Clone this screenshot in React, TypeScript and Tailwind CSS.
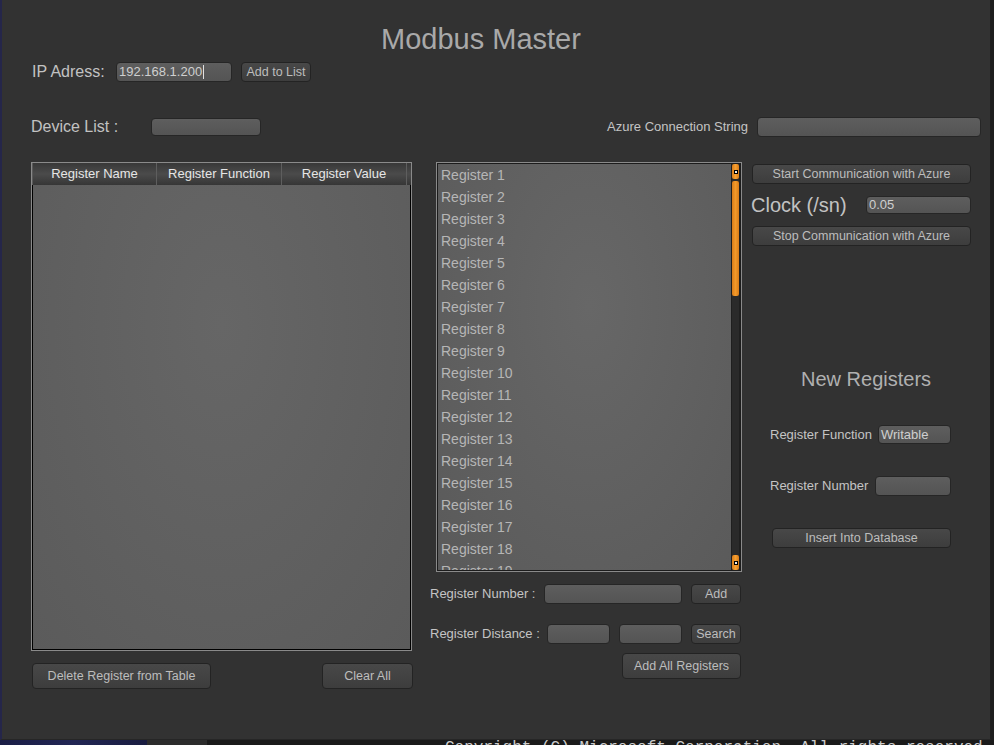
const input =
  "rounded-[4px] border border-[#262626] bg-linear-to-b from-[#5e5e5e] to-[#545454]";
const button =
  "rounded-[4px] border border-[#232323] bg-linear-to-b from-[#484848] to-[#3d3d3d] text-[12.5px] text-[#bdbdbd] flex items-center justify-center";

function Arrow() {
  return (
    <div className="h-[15px] rounded-[2px] bg-linear-to-r from-[#d97c18] via-[#f7a030] to-[#d97c18] flex items-center justify-center">
      <span className="w-[4px] h-[4px] border border-black bg-[#eeeeee]" />
    </div>
  );
}

function RegisterList() {
  // only the rows that fit are drawn; the 19th is cut by the frame
  const items = Array.from({ length: 19 }, (_, i) => `Register ${i + 1}`);
  return (
    <div className="ml-[6px] w-[306px] h-[410px] border border-[#8a8a8a]">
      <div className="h-full border border-[#1c1c1c] flex bg-[radial-gradient(ellipse_at_50%_35%,#676767_0%,#5a5a5a_100%)]">
        <div className="flex-1 overflow-hidden pl-[3px]">
          {items.map((t) => (
            <div key={t} className="h-[22px] leading-[22px] text-[14px] text-[#b6b6b6]">
              {t}
            </div>
          ))}
        </div>
        {/* scrollbar */}
        <div className="w-[9px] bg-[#2a2a2a] border-x border-[#1f1f1f] flex flex-col">
          <Arrow />
          <div className="mt-[2px] h-[115px] rounded-[2px] bg-linear-to-r from-[#d97c18] via-[#f39a2a] to-[#d97c18]" />
          <div className="flex-1" />
          <Arrow />
        </div>
      </div>
    </div>
  );
}

function RegisterTable() {
  const cols = ["Register Name", "Register Function", "Register Value"];
  return (
    <div className="w-[381px] h-[489px] border border-[#8a8a8a] flex flex-col">
      <div className="h-[22px] flex border-l border-[#5a5a5a]">
        {cols.map((c) => (
          <div
            key={c}
            className="w-[125px] first:w-[124px] flex items-center justify-center text-[13px] text-[#e6e6e6] border-r border-[#5e5e5e] bg-linear-to-b from-[#383838] via-[#4b4b4b] to-[#363636]"
          >
            {c}
          </div>
        ))}
        <div className="flex-1 bg-linear-to-b from-[#383838] via-[#4b4b4b] to-[#363636]" />
      </div>
      <div className="flex-1 border-x border-b border-black bg-[radial-gradient(ellipse_at_50%_30%,#666666_0%,#5b5b5b_100%)]" />
    </div>
  );
}

export default function App() {
  return (
    <div className="w-[994px] h-[745px] bg-[#1e1e1e] overflow-hidden font-['Liberation_Sans',Arial,sans-serif]">
      <div className="w-[991px] h-[740px] bg-[#323232] border-l-2 border-l-[#25264a] border-r border-r-[#1f1f1f] border-b border-b-[#262626] flex flex-col">
        {/* title */}
        <div className="mt-[22px] h-[34px] ml-[379px] text-[29px] leading-[34px] text-[#a9a9a9]">
          Modbus Master
        </div>

        {/* IP row */}
        <div className="mt-[6px] h-[20px] ml-[30px] flex items-center">
          <span className="w-[84px] text-[16px] text-[#c2c2c2]">IP Adress:</span>
          <div className={`${input} w-[116px] h-[20px] flex items-center pl-[2px] text-[13px] text-[#cfcfcf]`}>
            192.168.1.200
            <span className="ml-[1px] w-[1px] h-[14px] bg-[#e0e0e0]" />
          </div>
          <div className={`${button} ml-[9px] w-[70px] h-[20px]`}>Add to List</div>
        </div>

        {/* device / azure row */}
        <div className="mt-[35px] h-[20px] ml-[29px] mr-[9px] flex items-center">
          <span className="w-[120px] text-[16px] text-[#c2c2c2]">Device List :</span>
          <div className={`${input} w-[110px] h-[18px]`} />
          <div className="flex-1" />
          <span className="text-[13px] text-[#c4c4c4]">Azure Connection String</span>
          <div className={`${input} ml-[9px] w-[224px] h-[20px]`} />
        </div>

        {/* main */}
        <div className="mt-[25px] ml-[29px] flex">
          {/* left */}
          <div className="w-[382px] flex flex-col">
            <RegisterTable />
            <div className="mt-[12px] flex justify-between">
              <div className={`${button} ml-[1px] w-[179px] h-[26px]`}>Delete Register from Table</div>
              <div className={`${button} w-[91px] h-[26px]`}>Clear All</div>
            </div>
          </div>

          {/* middle */}
          <div className="ml-[17px] w-[312px] flex flex-col">
            <RegisterList />
            <div className="mt-[12px] h-[20px] flex items-center">
              <span className="w-[114px] text-[13px] text-[#c4c4c4]">Register Number :</span>
              <div className={`${input} w-[138px] h-[20px]`} />
              <div className={`${button} ml-[9px] w-[50px] h-[20px]`}>Add</div>
            </div>
            <div className="mt-[20px] h-[20px] flex items-center">
              <span className="w-[117px] text-[13px] text-[#c4c4c4]">Register Distance :</span>
              <div className={`${input} w-[63px] h-[20px]`} />
              <div className={`${input} ml-[9px] w-[63px] h-[20px]`} />
              <div className={`${button} ml-[9px] w-[50px] h-[20px]`}>Search</div>
            </div>
            <div className="mt-[9px] pr-[1px] flex justify-end">
              <div className={`${button} w-[119px] h-[26px]`}>Add All Registers</div>
            </div>
          </div>

          {/* right */}
          <div className="ml-[9px] w-[230px] flex flex-col">
            <div className={`${button} mt-[2px] ml-[1px] w-[219px] h-[20px]`}>
              Start Communication with Azure
            </div>
            <div className="mt-[12px] h-[18px] flex items-center">
              <span className="w-[115px] text-[20px] text-[#c2c2c2]">Clock (/sn)</span>
              <div className={`${input} w-[105px] h-[18px] flex items-center pl-[2px] text-[13px] text-[#cfcfcf]`}>
                0.05
              </div>
            </div>
            <div className={`${button} mt-[12px] ml-[1px] w-[219px] h-[20px]`}>
              Stop Communication with Azure
            </div>
            <div className="mt-[119px] h-[28px] pl-[50px] text-[20px] leading-[28px] text-[#b0b0b0]">
              New Registers
            </div>
            <div className="mt-[32px] h-[19px] ml-[19px] flex items-center">
              <span className="w-[108px] text-[13px] text-[#c4c4c4]">Register Function</span>
              <div className={`${input} w-[73px] h-[19px] flex items-center pl-[2px] text-[13px] text-[#cfcfcf]`}>
                Writable
              </div>
            </div>
            <div className="mt-[32px] h-[20px] ml-[19px] flex items-center">
              <span className="w-[105px] text-[13px] text-[#c4c4c4]">Register Number</span>
              <div className={`${input} w-[76px] h-[20px]`} />
            </div>
            <div className={`${button} mt-[32px] ml-[21px] w-[179px] h-[20px]`}>Insert Into Database</div>
          </div>
        </div>
      </div>

      {/* what lies behind the window */}
      <div className="h-[5px] flex overflow-hidden">
        <div className="w-[147px] bg-linear-to-r from-[#1a1d46] via-[#222654] to-[#191c40]" />
        <div className="w-[60px] bg-[#2c2c2c]" />
        <div className="flex-1 bg-[#1a1a1a] pl-[238px] whitespace-nowrap text-[16px] leading-[16px] text-[#cccccc] font-['Liberation_Mono',monospace]">
          Copyright (C) Microsoft Corporation. All rights reserved.
        </div>
      </div>
    </div>
  );
}
